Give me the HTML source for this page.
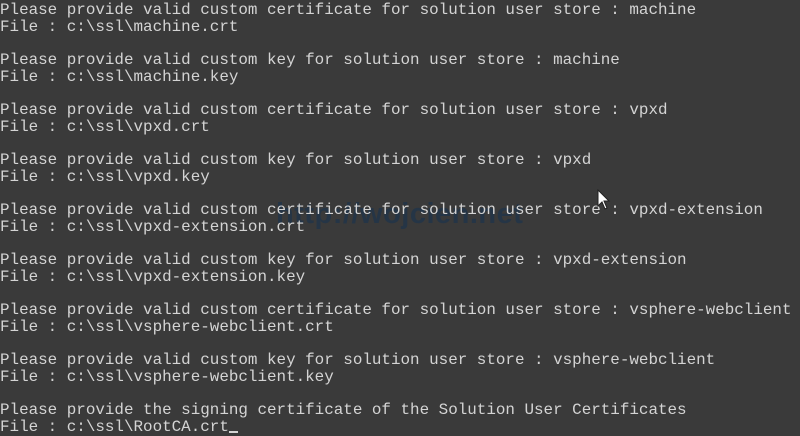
<!DOCTYPE html>
<html><head><meta charset="utf-8"><style>
html,body{margin:0;padding:0;}
body{width:800px;height:434px;overflow:hidden;background:#3a3a3a;position:relative;}
pre{margin:0;position:absolute;left:0;top:2px;font-family:"Liberation Mono",monospace;font-size:15.9px;line-height:16.67px;color:#d4d4d4;white-space:pre;}
.wm{position:absolute;left:276px;top:198px;font-family:"Liberation Sans",sans-serif;font-size:29px;font-weight:bold;color:rgba(20,50,80,0.55);letter-spacing:0.5px;}
.cur{display:inline-block;width:9px;height:2px;background:#d4d4d4;vertical-align:-2px;}
svg{position:absolute;left:597px;top:189px;}
</style></head><body>
<div class="wm">http://wojcien.net</div>
<pre>Please provide valid custom certificate for solution user store : machine
File : c:\ssl\machine.crt

Please provide valid custom key for solution user store : machine
File : c:\ssl\machine.key

Please provide valid custom certificate for solution user store : vpxd
File : c:\ssl\vpxd.crt

Please provide valid custom key for solution user store : vpxd
File : c:\ssl\vpxd.key

Please provide valid custom certificate for solution user store : vpxd-extension
File : c:\ssl\vpxd-extension.crt

Please provide valid custom key for solution user store : vpxd-extension
File : c:\ssl\vpxd-extension.key

Please provide valid custom certificate for solution user store : vsphere-webclient
File : c:\ssl\vsphere-webclient.crt

Please provide valid custom key for solution user store : vsphere-webclient
File : c:\ssl\vsphere-webclient.key

Please provide the signing certificate of the Solution User Certificates
File : c:\ssl\RootCA.crt<span class="cur"></span></pre>
<svg width="14" height="22" viewBox="0 0 14 22"><path d="M1 1 L1 17 L5 13 L8 20 L10 19 L7 12 L12 12 Z" fill="#fff" stroke="#222" stroke-width="1"/></svg>
</body></html>
